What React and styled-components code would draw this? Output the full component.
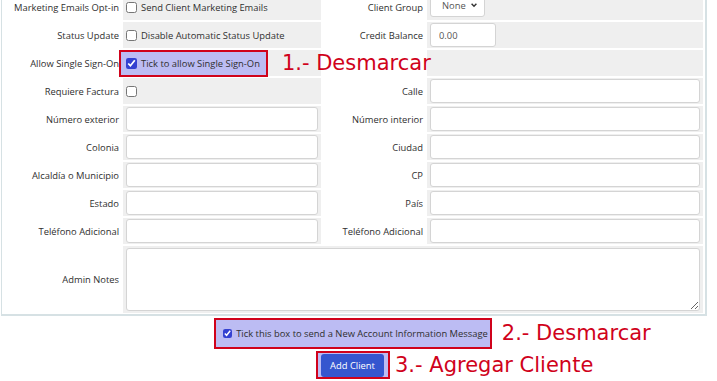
import React from 'react';
import styled, { createGlobalStyle } from 'styled-components';

const GlobalStyle = createGlobalStyle`
    body {
        margin: 0;
        background: #fff;
        font-family: "Open Sans", "Noto Sans", sans-serif;
    }
`

const rows = [
    { l1: 'Número exterior', l2: 'Número interior' },
    { l1: 'Colonia', l2: 'Ciudad' },
    { l1: 'Alcaldía o Municipio', l2: 'CP' },
    { l1: 'Estado', l2: 'País' },
    { l1: 'Teléfono Adicional', l2: 'Teléfono Adicional' },
];

const App = () => (
    <Page>
        <GlobalStyle />
        <Panel>
            <Grid>
                <Label>Marketing Emails Opt-in</Label>
                <Field><Check type="checkbox" /><CheckText>Send Client Marketing Emails</CheckText></Field>
                <Label>Client Group</Label>
                <Field><Select><span>None</span><Chevron viewBox="0 0 10 10"><path d="M2 3.5 L5 6.5 L8 3.5" /></Chevron></Select></Field>

                <Label>Status Update</Label>
                <Field><Check type="checkbox" /><CheckText>Disable Automatic Status Update</CheckText></Field>
                <Label>Credit Balance</Label>
                <Field><Input width="66px" defaultValue="0.00" /></Field>

                <Label>Allow Single Sign-On</Label>
                <Field>
                    <Highlight>
                        <Check type="checkbox" defaultChecked /><CheckText>Tick to allow Single Sign-On</CheckText>
                    </Highlight>
                    <Note>1.- Desmarcar</Note>
                </Field>
                <Label />
                <Field />

                <Label>Requiere Factura</Label>
                <Field><Check type="checkbox" /></Field>
                <Label>Calle</Label>
                <Field><Input /></Field>

                {rows.map((r) => (
                    <React.Fragment key={r.l1 + r.l2}>
                        <Label>{r.l1}</Label>
                        <Field><Input /></Field>
                        <Label>{r.l2}</Label>
                        <Field><Input /></Field>
                    </React.Fragment>
                ))}

                <Label>Admin Notes</Label>
                <Field wide tall><Notes /></Field>
            </Grid>
        </Panel>

        <FooterRow>
            <span />
            <Highlight big>
                <Check small type="checkbox" defaultChecked /><CheckText>Tick this box to send a New Account Information Message</CheckText>
            </Highlight>
            <Note gap="10px">2.- Desmarcar</Note>
        </FooterRow>
        <FooterRow>
            <span />
            <ButtonBox><Button>Add Client</Button></ButtonBox>
            <Note gap="5px">3.- Agregar Cliente</Note>
        </FooterRow>
    </Page>
);

const Page = styled.div`
    width: 717px;
    height: 381px;
    overflow: hidden;
`
const Panel = styled.div`
    width: 701px;
    margin-top: -8px;
    margin-left: 1px;
    border: 1px solid #d6e1e4;
    border-width: 1px 2px 2px 1px;
    padding: 1px;
    background: #fff;
`
const Grid = styled.div`
    display: grid;
    grid-template-columns: 120px 198px 106px 276px;
    grid-auto-rows: minmax(26px, auto);
    row-gap: 2px;
`
const Label = styled.div`
    display: flex;
    align-items: center;
    justify-content: flex-end;
    padding-right: 4px;
    font-size: 9.4px;
    color: #2f2f2f;
    white-space: nowrap;
`
const Field = styled.div`
    display: flex;
    align-items: center;
    padding: 0 3px;
    background: #efefef;
    white-space: nowrap;
    grid-column: ${p => p.wide ? 'span 3' : 'auto'};
    height: ${p => p.tall ? '67px' : '26px'};
    box-sizing: border-box;
`
const Check = styled.input`
    width: ${p => p.small ? '9px' : '11px'};
    height: ${p => p.small ? '9px' : '11px'};
    margin: 0 4px 0 0;
    accent-color: #3441d1;
`
const CheckText = styled.span`
    font-size: 9.4px;
    color: #2f2f2f;
`
const Input = styled.input`
    width: ${p => p.width || '100%'};
    height: 24px;
    box-sizing: border-box;
    border: 1px solid #d4d4d4;
    border-radius: 3px;
    background: #fff;
    padding: 0 8px;
    font-family: "Open Sans", sans-serif;
    font-size: 9.4px;
    color: #555;
    outline: none;
`
const Select = styled.div`
    width: 55px;
    height: 23px;
    margin-top: -4px;
    box-sizing: border-box;
    border: 1px solid #d4d4d4;
    border-radius: 3px;
    background: #fff;
    display: flex;
    align-items: center;
    justify-content: space-between;
    padding: 0 6px 0 11px;
    font-size: 9.4px;
    color: #555;
`
const Chevron = styled.svg`
    width: 8px;
    height: 8px;
    fill: none;
    stroke: #333;
    stroke-width: 1.8;
`
const Notes = styled.textarea`
    width: 100%;
    height: 63px;
    box-sizing: border-box;
    border: 1px solid #d4d4d4;
    border-radius: 3px;
    background: #fff;
    resize: vertical;
    outline: none;
`
const Highlight = styled.div`
    display: flex;
    align-items: center;
    box-sizing: border-box;
    height: ${p => p.big ? '31px' : '27px'};
    margin-left: ${p => p.big ? '0' : '-7px'};
    margin-top: ${p => p.big ? '0' : '1px'};
    padding: ${p => p.big ? '0 2px 0 7px' : '0 6px 0 5px'};
    border: 2px solid #d0021b;
    background: #bcbcf3;
`
const Note = styled.span`
    position: relative;
    z-index: 1;
    font-family: "DejaVu Sans", sans-serif;
    font-size: 21px;
    color: #d0021b;
    white-space: nowrap;
    margin-left: ${p => p.gap || '14px'};
    line-height: 1;
`
const FooterRow = styled.div`
    width: 706px;
    display: grid;
    grid-template-columns: 1fr auto 1fr;
    align-items: center;
    justify-items: start;
    margin-top: 2px;

    &:first-of-type {
        margin-top: 3px;
    }
`
const ButtonBox = styled.div`
    box-sizing: border-box;
    height: 28px;
    padding: 1px 4px 1px 3px;
    border: 2px solid #d0021b;
    background: #bcbcf3;
    display: flex;
    align-items: center;
`
const Button = styled.button`
    height: 23px;
    width: 63px;
    border: none;
    border-radius: 3px;
    background: #3556cf;
    color: #fff;
    font-family: "Open Sans", sans-serif;
    font-size: 9.4px;
    padding: 0;
`

export default App;
